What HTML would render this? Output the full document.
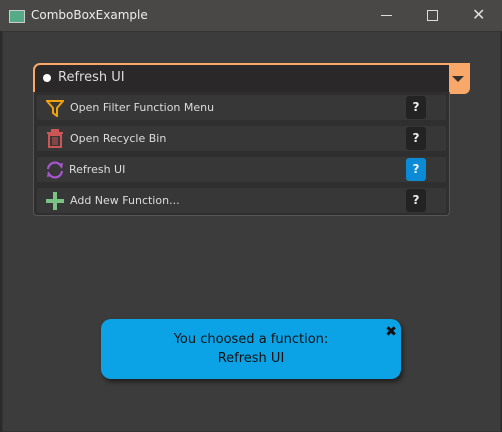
<!DOCTYPE html><html><head><style>
body{margin:0;width:502px;height:432px;background:#2b2b2b;font-family:"DejaVu Sans","Liberation Sans",sans-serif;overflow:hidden;position:relative}
.t{position:absolute;left:0;top:0;width:502px;height:31px;background:#4a4846;color:#eee;font-size:12px}
.body{position:absolute;left:2px;top:31px;width:497px;height:399px;background:#3c3c3c;border:1px solid #333}
.combo{position:absolute;left:33px;top:63px;width:433px;height:27px;border:2px solid #f9a869;border-radius:7px 0 6px 0;background:#2a2828}
.arr{position:absolute;right:0;top:0;width:19px;height:27px;background:#f9a869}
.pop{position:absolute;left:33px;top:92px;width:415px;height:123px;background:#2f2f2f;border:1px solid #555;border-top:none;border-radius:0 0 4px 4px}
.row{position:absolute;left:3px;width:409px;height:25px;background:#373737;border-radius:2px;color:#ddd;font-size:11px;line-height:25px}
.q{position:absolute;right:20px;top:1px;width:20px;height:23px;background:#232323;border-radius:3px;color:#eee;font-weight:bold;text-align:center;line-height:23px;font-size:12px}
.toast{position:absolute;left:101px;top:319px;width:300px;height:60px;background:#0ba3e6;border-radius:10px;box-shadow:2px 3px 5px rgba(0,0,0,.5);text-align:center;font-size:13px;color:#111;line-height:19px}
</style></head><body>
<div class="t">
<div style="position:absolute;left:9px;top:10px;width:14px;height:11px;background:#5a8;border:1px solid #ccc"></div>
<span style="position:absolute;left:31px;top:8px">ComboBoxExample</span>
<div style="position:absolute;left:381px;top:15px;width:11px;height:1px;background:#ddd"></div>
<div style="position:absolute;left:427px;top:10px;width:9px;height:9px;border:1px solid #ddd"></div>
<span style="position:absolute;left:472px;top:5px;font-size:16px;color:#ddd">✕</span>
</div>
<div class="body"></div>
<div class="combo"><div style="position:absolute;left:8px;top:9px;width:8px;height:8px;border-radius:50%;background:#fff"></div>
<span style="position:absolute;left:23px;top:5px;color:#ddd;font-size:13px">Refresh UI</span>
<div class="arr"><div style="position:absolute;left:3px;top:11px;border-left:6px solid transparent;border-right:6px solid transparent;border-top:6px solid #333"></div></div></div>
<div class="pop">
<div class="row" style="top:3px"><svg style="position:absolute;left:9px;top:4px" width="18" height="18"><path d="M1 2H17L11 9V17L7 14V9Z" fill="none" stroke="#f2a20c" stroke-width="2"/></svg><span style="position:absolute;left:33px">Open Filter Function Menu</span><div class="q">?</div></div>
<div class="row" style="top:34px"><svg style="position:absolute;left:10px;top:3px" width="16" height="19"><rect x="4" y="0" width="8" height="3" fill="#c55"/><rect x="0" y="3" width="16" height="2" fill="#c55"/><rect x="2" y="6" width="12" height="12" fill="none" stroke="#c55" stroke-width="2"/><path d="M6 8V16M8 8V16M10 8V16" stroke="#c55"/></svg><span style="position:absolute;left:33px">Open Recycle Bin</span><div class="q">?</div></div>
<div class="row" style="top:65px"><svg style="position:absolute;left:8px;top:3px" width="20" height="20"><path d="M3 9A7 7 0 0 1 16 6M17 11A7 7 0 0 1 4 14" fill="none" stroke="#a855d0" stroke-width="2.2"/><path d="M13 4L18 3L17 9Z M7 16L2 17L3 11Z" fill="#a855d0"/></svg><span style="position:absolute;left:32px">Refresh UI</span><div class="q" style="background:#0b8ad6">?</div></div>
<div class="row" style="top:96px"><svg style="position:absolute;left:8px;top:3px" width="20" height="20"><path d="M10 1V19M1 10H19" stroke="#7bc384" stroke-width="4"/></svg><span style="position:absolute;left:33px">Add New Function...</span><div class="q">?</div></div>
</div>
<div class="toast"><div style="padding-top:11px">You choosed a function:<br>Refresh UI</div><span style="position:absolute;right:4px;top:4px;font-weight:bold;font-size:14px">✖</span></div>
</body></html>
